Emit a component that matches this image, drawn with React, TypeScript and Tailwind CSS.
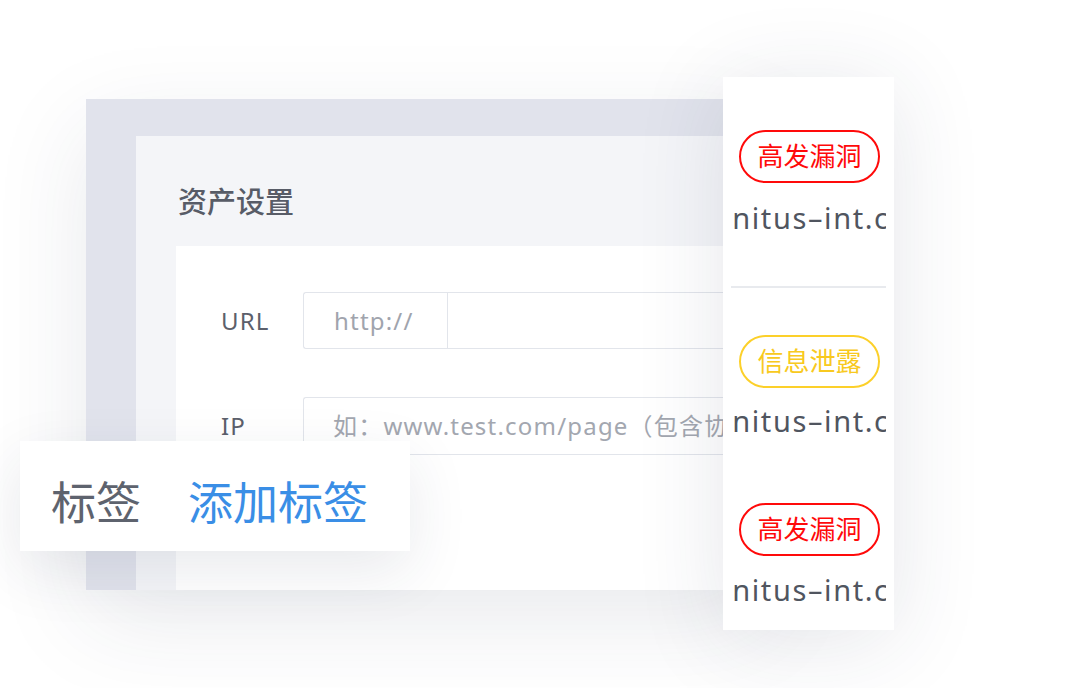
import React from 'react';

const cjk = "font-['Noto_Sans','Noto_Sans_CJK_SC',sans-serif]";

function Pill({ label, tone }: { label: string; tone: 'red' | 'yellow' }) {
    const color = tone === 'red' ? 'border-[#ff0a0a] text-[#ff0a0a]' : 'border-[#fcd02a] text-[#f8c920]';
    return (
        <div className={`ml-[8px] w-[141px] h-[53px] rounded-full border-2 flex items-center justify-center text-[26px] ${color}`}>
            {label}
        </div>
    );
}

function Domain() {
    // 域名被卡片边缘裁掉，只露出中间一段
    return (
        <div className="w-[155px] h-[36px] overflow-hidden whitespace-nowrap">
            <span className="block -ml-[48px] text-[29px] leading-[36px] tracking-[1.6px] text-[#50555f]">
                infinitus–int.com
            </span>
        </div>
    );
}

export default function App() {
    return (
        <div className={`relative w-[1072px] h-[688px] bg-white overflow-hidden ${cjk}`}>
            {/* 背景面板 */}
            <div className="absolute left-[86px] top-[99px] w-[680px] h-[491px] bg-[#e1e3ec] pl-[50px] pt-[37px] flex shadow-[0_30px_90px_rgba(40,50,80,0.10)]">
                <div className="flex-1 bg-[#f4f5f8] flex flex-col">
                    <h2 className="ml-[42px] mt-[48px] text-[29px] leading-[36px] font-medium text-[#585c67]">资产设置</h2>
                    <div className="ml-[40px] mt-[26px] flex-1 bg-white pl-[45px] pt-[46px] flex flex-col gap-[48px] text-[24px] tracking-[1.2px]">
                        <div className="flex items-center">
                            <span className="w-[82px] text-[#5c606b]">URL</span>
                            <div className="flex-1 h-[57px] rounded-l-[3px] border-[1.5px] border-r-0 border-[#e2e5eb] flex">
                                <div className="w-[144px] border-r-[1.5px] border-[#e2e5eb] flex items-center pl-[30px] text-[#a0a4ad]">
                                    http://
                                </div>
                            </div>
                        </div>
                        <div className="flex items-center">
                            <span className="w-[82px] text-[#5c606b]">IP</span>
                            <div className="flex-1 h-[58px] rounded-l-[3px] border-[1.5px] border-r-0 border-[#e2e5eb] flex items-center pl-[29px] overflow-hidden whitespace-nowrap text-[#a3a7b0]">
                                如：www.test.com/page（包含协议头）
                            </div>
                        </div>
                    </div>
                </div>
            </div>

            {/* 标签卡片 */}
            <div className="absolute left-[20px] top-[441px] w-[390px] h-[110px] bg-white flex items-center pl-[31px] pt-[14px] gap-[47px] text-[45px] shadow-[0_20px_60px_rgba(40,50,80,0.10)]">
                <span className="text-[#5e636e]">标签</span>
                <span className="text-[#3a8ee6]">添加标签</span>
            </div>

            {/* 右侧漏洞列表 */}
            <div className="absolute left-[723px] top-[77px] w-[171px] h-[553px] bg-white pl-[8px] flex flex-col shadow-[0_10px_90px_rgba(40,50,80,0.12)]">
                <div className="mt-[53px]"><Pill label="高发漏洞" tone="red" /></div>
                <div className="mt-[17px]"><Domain /></div>
                <div className="mt-[50px] w-[155px] h-[2px] bg-[#e8eaee]" />
                <div className="mt-[47px]"><Pill label="信息泄露" tone="yellow" /></div>
                <div className="mt-[15px]"><Domain /></div>
                <div className="mt-[64px]"><Pill label="高发漏洞" tone="red" /></div>
                <div className="mt-[16px]"><Domain /></div>
            </div>
        </div>
    );
}
